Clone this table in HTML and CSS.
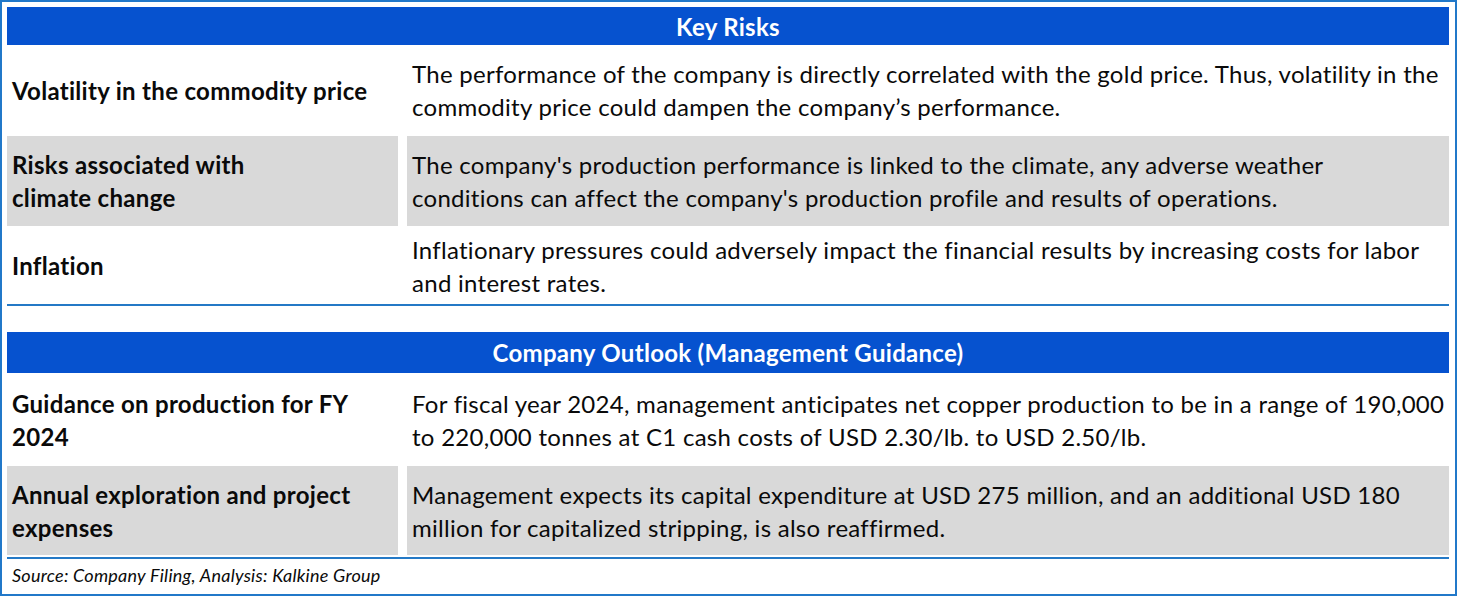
FILE: index.html
```html
<!DOCTYPE html>
<html>
<head>
<meta charset="utf-8">
<link rel="stylesheet" href="styles.css">
</head>
<body>
<div class="frame">
  <section class="block">
    <div class="head head-1">Key Risks</div>
    <div class="row row-1">
      <div class="cell label">Volatility in the commodity price</div>
      <div class="cell text">The performance of the company is directly correlated with the gold price. Thus, volatility in the<br>commodity price could dampen the company’s performance.</div>
    </div>
    <div class="row row-2 shaded">
      <div class="cell label">Risks associated with<br>climate change</div>
      <div class="cell text">The company's production performance is linked to the climate, any adverse weather<br>conditions can affect the company's production profile and results of operations.</div>
    </div>
    <div class="row row-3">
      <div class="cell label">Inflation</div>
      <div class="cell text">Inflationary pressures could adversely impact the financial results by increasing costs for labor<br>and interest rates.</div>
    </div>
    <div class="rule"></div>
  </section>
  <section class="block block-2">
    <div class="head head-2">Company Outlook (Management Guidance)</div>
    <div class="row row-4">
      <div class="cell label">Guidance on production for FY<br>2024</div>
      <div class="cell text">For fiscal year 2024, management anticipates net copper production to be in a range of 190,000<br>to 220,000 tonnes at C1 cash costs of USD 2.30/lb. to USD 2.50/lb.</div>
    </div>
    <div class="row row-5 shaded">
      <div class="cell label">Annual exploration and project<br>expenses</div>
      <div class="cell text">Management expects its capital expenditure at USD 275 million, and an additional USD 180<br>million for capitalized stripping, is also reaffirmed.</div>
    </div>
    <div class="rule rule-bottom"></div>
    <div class="source">Source: Company Filing, Analysis: Kalkine Group</div>
  </section>
</div>
</body>
</html>
```
FILE: styles.css
```css
* { box-sizing: border-box; margin: 0; padding: 0; }
html, body { background: #ffffff; }
body {
  margin: 0;
  font-family: Lato, "Open Sans", sans-serif;
  color: #0a0a0a;
}
.frame {
  width: 1457px;
  height: 596px;
  border: 2px solid #2178c9;
  padding: 5px 6px 0 5px;
  display: flex;
  flex-direction: column;
}
.head {
  background: #0652cf;
  color: #ffffff;
  font-weight: 700;
  font-size: 24px;
  letter-spacing: 0.3px;
  display: flex;
  align-items: center;
  justify-content: center;
}
.head-1 { height: 38px; }
.head-2 { height: 41px; }
.row {
  display: grid;
  grid-template-columns: 391px 1042px;
  column-gap: 9px;
  font-size: 24px;
  letter-spacing: 0.28px;
  line-height: 33px;
}
.cell {
  padding: 0 5px;
  display: flex;
  align-items: center;
}
.text { white-space: nowrap; }
.label { font-weight: 700; letter-spacing: 0.3px; }
.shaded .cell { background: #d9d9d9; }
.row-1 { height: 91px; }
.row-1 .cell { padding-bottom: 1px; }
.row-2 { height: 91px; }
.row-2 .cell { height: 90px; }
.row-3 { height: 77px; }
.row-4 { height: 93px; }
.row-5 { height: 89px; }
.rule {
  height: 2px;
  background: #2479c6;
}
.block-2 { margin-top: 26px; }
.rule-bottom { margin-top: 2px; }
.source {
  font-size: 18px;
  font-style: italic;
  letter-spacing: 0.25px;
  padding: 5px 5px 0;
  line-height: 22px;
}
```
